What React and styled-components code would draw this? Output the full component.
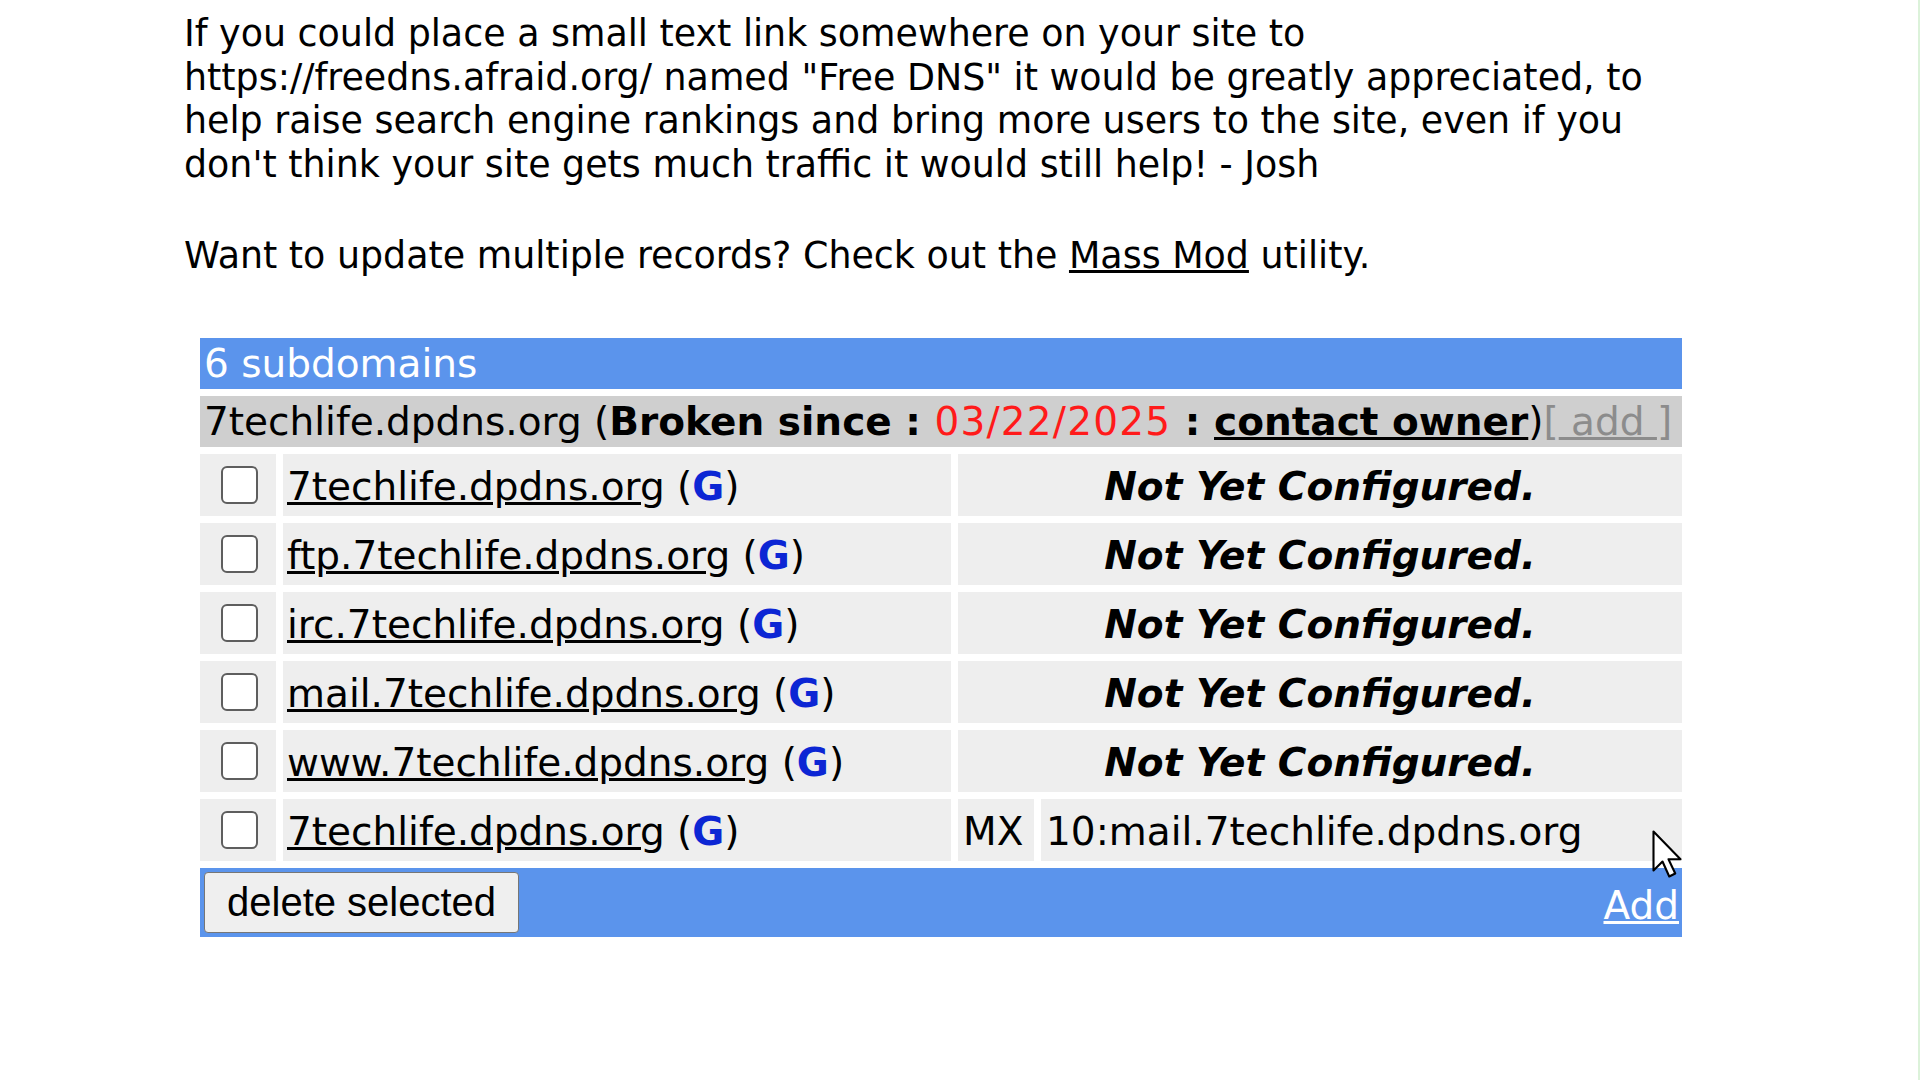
import React from 'react';
import styled, { createGlobalStyle } from 'styled-components';

const GlobalStyle = createGlobalStyle`
  html, body {
    margin: 0;
    padding: 0;
    background: #ffffff;
  }
  body {
    font-family: "DejaVu Sans", Verdana, sans-serif;
    color: #000;
  }
`;

const records = [
  { name: '7techlife.dpdns.org' },
  { name: 'ftp.7techlife.dpdns.org' },
  { name: 'irc.7techlife.dpdns.org' },
  { name: 'mail.7techlife.dpdns.org' },
  { name: 'www.7techlife.dpdns.org' },
  { name: '7techlife.dpdns.org', type: 'MX', value: '10:mail.7techlife.dpdns.org' },
];

const App = () => {
  return (
    <Page>
      <GlobalStyle />
      <Intro>
        If you could place a small text link somewhere on your site to<br />
        https://freedns.afraid.org/ named "Free DNS" it would be greatly appreciated, to<br />
        help raise search engine rankings and bring more users to the site, even if you<br />
        don't think your site gets much traffic it would still help! - Josh
      </Intro>
      <Note>
        Want to update multiple records? Check out the <TextLink href="#">Mass Mod</TextLink> utility.
      </Note>

      <Table>
        <Header>6 subdomains</Header>
        <Zone>
          7techlife.dpdns.org (<b>Broken since : </b>
          <DateText>03/22/2025</DateText>
          <b> : </b>
          <OwnerLink href="#">contact owner</OwnerLink>)
          <AddBracket>[<a href="#">&nbsp;add&nbsp;</a>]</AddBracket>
        </Zone>

        {records.map((r, i) => (
          <React.Fragment key={i}>
            <Cell $center>
              <Check />
            </Cell>
            <Cell $pad={4}>
              <DomainLink href="#">{r.name}</DomainLink>
              &nbsp;(<GLetter>G</GLetter>)
            </Cell>
            {r.type ? (
              <>
                <Cell $pad={5}>{r.type}</Cell>
                <Cell $pad={5}>{r.value}</Cell>
              </>
            ) : (
              <Cell $center $span={2}>
                <Pending>Not Yet Configured.</Pending>
              </Cell>
            )}
          </React.Fragment>
        ))}

        <Footer>
          <DeleteButton>delete selected</DeleteButton>
          <AddLink href="#">Add</AddLink>
        </Footer>
      </Table>

      <Cursor viewBox="0 0 24 36" width="36" height="56">
        <path
          d="M1 1 L1 27 L7 21 L11.5 31 L15.5 29 L11 19.5 L19 19.5 Z"
          fill="#fff"
          stroke="#000"
          strokeWidth="1.4"
          strokeLinejoin="round"
        />
      </Cursor>
    </Page>
  );
};

export default App;

const Page = styled.div`
  position: relative;
  min-height: 100vh;
  box-sizing: border-box;
  padding: 12px 0 0 184px;
  border-right: 2px solid #dcf2da;
  font-size: 36.4px;
  line-height: 43.6px;
`;

const Intro = styled.p`
  margin: 0;
  white-space: nowrap;
`;

const Note = styled.p`
  margin: 48px 0 0;
  white-space: nowrap;
`;

const TextLink = styled.a`
  color: #000;
  text-decoration: underline;
`;

const Table = styled.div`
  display: grid;
  grid-template-columns: 76px 668px 76px 1fr;
  gap: 7px;
  width: 1482px;
  margin: 60px 0 0 16px;
  font-size: 39px;
`;

const Header = styled.div`
  grid-column: 1 / -1;
  height: 51px;
  display: flex;
  align-items: center;
  padding-left: 4px;
  background: #5b94ec;
  color: #fff;
`;

const Zone = styled.div`
  grid-column: 1 / -1;
  height: 51px;
  display: flex;
  align-items: center;
  padding-left: 4px;
  background: #cfcfcf;
  white-space: pre;
  overflow: hidden;

  b {
    font-weight: bold;
  }
`;

const DateText = styled.span`
  color: #ff1a1a;
  letter-spacing: 1.2px;
`;

const OwnerLink = styled.a`
  color: #000;
  font-weight: bold;
  text-decoration: underline;
`;

const AddBracket = styled.span`
  color: #8c8c8c;

  a {
    color: #8c8c8c;
    text-decoration: underline;
  }
`;

const Cell = styled.div`
  grid-column: span ${({ $span }) => $span || 1};
  height: 62px;
  box-sizing: border-box;
  display: flex;
  align-items: center;
  justify-content: ${({ $center }) => ($center ? 'center' : 'flex-start')};
  padding: 3px ${({ $pad }) => $pad || 0}px 0;
  background: #eeeeee;
  white-space: nowrap;
`;

const Check = styled.input.attrs({ type: 'checkbox' })`
  appearance: none;
  width: 37px;
  height: 38px;
  margin: -3px 0 0 2px;
  border: 2px solid #5e5e5e;
  border-radius: 6px;
  background: #fff;
`;

const DomainLink = styled.a`
  color: #000;
  text-decoration: underline;
`;

const GLetter = styled.b`
  color: #0c26d4;
`;

const Pending = styled.span`
  font-weight: bold;
  font-style: italic;
`;

const Footer = styled.div`
  grid-column: 1 / -1;
  height: 69px;
  box-sizing: border-box;
  display: flex;
  justify-content: space-between;
  padding: 4px 3px 0 4px;
  background: #5b94ec;
`;

const DeleteButton = styled.button`
  height: 61px;
  padding: 0 22px;
  font-family: "Liberation Sans", Arial, sans-serif;
  font-size: 40px;
  color: #000;
  background: #efefef;
  border: 1px solid #767676;
  border-radius: 4px;
`;

const AddLink = styled.a`
  align-self: flex-end;
  margin-bottom: 6px;
  color: #fff;
  text-decoration: underline;
  line-height: 50px;
`;

const Cursor = styled.svg`
  position: absolute;
  left: 1652px;
  top: 829px;
`;
